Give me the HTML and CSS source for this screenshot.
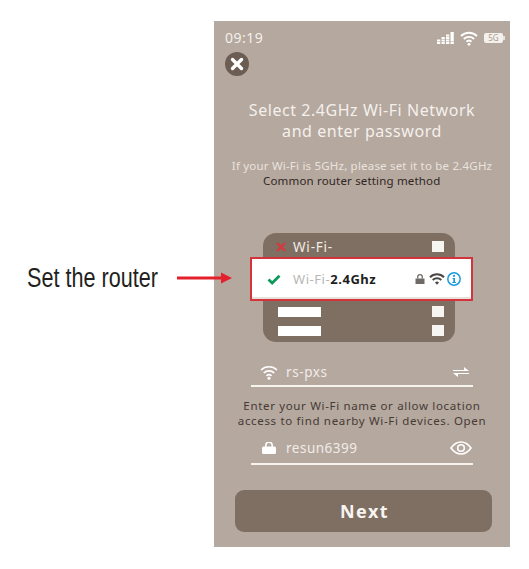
FILE: index.html
```html
<!DOCTYPE html>
<html lang="en">
<head>
<meta charset="utf-8">
<title>Set the router</title>
<link rel="stylesheet" href="styles.css">
</head>
<body>
<div class="page">
  <div class="callout">
    <span class="callout-label"><span class="callout-text">Set the router</span></span>
    <svg class="callout-arrow" width="55" height="14" viewBox="0 0 55 14"><path d="M0 5.500H44V1.500L55 7L44 12.500V8.500H0Z" fill="#e3202c"/></svg>
  </div>
  <main class="phone">
    <div class="status">
      <span class="time">09:19</span>
      <div class="status-icons">
        <svg width="17" height="12" viewBox="0 0 17 12" fill="#fff"><path d="M0 7.400h3.300v2H0zM0 10h3.300v2H0zM4.500 5h3.300v2H4.500zM4.500 7.400h3.300v2H4.500zM4.500 10h3.300v2H4.500zM9 2.600h3.300v2H9zM9 5h3.300v2H9zM9 7.400h3.300v2H9zM9 10h3.300v2H9zM13.500 0h3.300v9.400h-3.300zM13.500 10h3.300v2h-3.300z"/></svg>
        <svg width="18" height="15" viewBox="0 0 18 15" fill="none" stroke="#fff" stroke-width="1.900"><path d="M1 5a11.500 11.500 0 0 1 16 0M3.800 8a7.500 7.500 0 0 1 10.400 0M6.500 10.800a3.600 3.600 0 0 1 5 0"/><circle cx="9" cy="13.300" r="1.400" fill="#fff" stroke="none"/></svg>
        <div class="battery"><span>5G</span></div>
      </div>
    </div>
    <button class="close" aria-label="Close">
      <svg width="24" height="24" viewBox="0 0 24 24"><circle cx="12" cy="12" r="12" fill="#6b5d53"/><path d="M7.500 7.500L16.500 16.500M16.500 7.500L7.500 16.500" stroke="#fff" stroke-width="3.400" stroke-linecap="round"/></svg>
    </button>
    <h1 class="title">Select 2.4GHz Wi-Fi Network<br>and enter password</h1>
    <p class="hint">If your Wi-Fi is 5GHz, please set it to be 2.4GHz</p>
    <p class="method">Common router setting method</p>

    <section class="networks">
      <div class="net-row">
        <svg class="net-x" width="10" height="10" viewBox="0 0 10 10"><path d="M1 1L9 9M9 1L1 9" stroke="#d8383c" stroke-width="2.200"/></svg>
        <span class="net-name">Wi-Fi-</span>
        <span class="box"></span>
      </div>
      <div class="net-gap"></div>
      <div class="net-row bar-row"><span class="bar"></span><span class="box"></span></div>
      <div class="net-row bar-row"><span class="bar"></span><span class="box"></span></div>
      <div class="selected">
        <svg class="check" width="14" height="11" viewBox="0 0 14 11"><path d="M1.500 5.500L5.200 9L12.500 1.800" fill="none" stroke="#0f9a5c" stroke-width="2.800"/></svg>
        <span class="sel-name">Wi-Fi-<b>2.4Ghz</b></span>
        <div class="sel-icons">
          <svg width="10" height="10" viewBox="0 0 10 10"><path d="M0.500 4.500h9V10h-9z" fill="#6e6a67"/><path d="M2.700 4.500V3a2.300 2.300 0 0 1 4.600 0v1.500" fill="none" stroke="#6e6a67" stroke-width="1.300"/></svg>
          <svg width="16" height="12" viewBox="0 0 16 12" fill="none" stroke="#4a4644" stroke-width="2"><path d="M1 4.200a10 10 0 0 1 14 0M3.700 7a6.200 6.200 0 0 1 8.600 0"/><path d="M6 9.500L8 11.800L10 9.500a3 3 0 0 0-4 0z" fill="#4a4644" stroke="none"/></svg>
          <svg width="14" height="14" viewBox="0 0 14 14"><circle cx="7" cy="7" r="6.200" fill="#fff" stroke="#1b9bdc" stroke-width="1.500"/><circle cx="7" cy="3.900" r="1.100" fill="#1b9bdc"/><path d="M5.500 6h2.500v4h1v1.100H5.300V10h1V7.100h-0.800z" fill="#1b9bdc"/></svg>
        </div>
      </div>
    </section>

    <div class="field field-wifi">
      <svg class="field-icon" width="18" height="15" viewBox="0 0 18 15" fill="none" stroke="#fff" stroke-width="1.700"><path d="M1 5a11.500 11.500 0 0 1 16 0M3.800 8a7.500 7.500 0 0 1 10.400 0M6.500 10.800a3.600 3.600 0 0 1 5 0"/><circle cx="9" cy="13.300" r="1.500" fill="#fff" stroke="none"/></svg>
      <span class="field-text">rs-pxs</span>
      <svg class="swap" width="16" height="10" viewBox="0 0 16 10" fill="#fff"><path d="M0 4V3h11V0l5 4zM16 6v1H5v3L0 6z"/></svg>
    </div>
    <p class="help">Enter your Wi-Fi name or allow location<br>access to find nearby Wi-Fi devices. Open</p>
    <div class="field field-pass">
      <svg class="field-icon lock" width="14" height="12" viewBox="0 0 14 12"><rect x="0" y="4.500" width="14" height="7.500" rx="1.500" fill="#fff"/><path d="M3.800 5V3.400a3.200 3.200 0 0 1 6.400 0V5" fill="none" stroke="#fff" stroke-width="1.500"/></svg>
      <span class="field-text">resun6399</span>
      <svg class="eye" width="22" height="14" viewBox="0 0 22 14" fill="none" stroke="#fff" stroke-width="1.600"><path d="M1 7C4 2.800 7.500 1 11 1s7 1.800 10 6c-3 4.200-6.500 6-10 6S4 11.200 1 7z"/><circle cx="11" cy="7" r="3.300"/></svg>
    </div>
    <button class="next">Next</button>
  </main>
</div>
</body>
</html>
```
FILE: styles.css
```css
* { box-sizing: border-box; }
html, body { margin: 0; padding: 0; background: #fff; }
body { width: 529px; height: 569px; overflow: hidden; }
.page { display: flex; align-items: flex-start; padding-top: 21px; }

.callout { position: relative; z-index: 1; width: 214px; height: 514px; display: flex; align-items: center; padding-left: 27px; gap: 18px; flex: none; }
.callout-label { display: block; width: 132px; flex: none; font-family: "Liberation Sans", sans-serif; font-size: 27px; color: #231f20; white-space: nowrap; line-height: 30px; }
.callout-text { display: inline-block; transform: scaleX(0.8); transform-origin: left center; }
.callout-arrow { flex: none; }

.phone { width: 296px; height: 526px; flex: none; background: #b5a89f; font-family: "Noto Sans", sans-serif; color: #fff; display: flex; flex-direction: column; align-items: stretch; }

.status { display: flex; justify-content: space-between; align-items: center; height: 18px; margin-top: 8px; padding: 0 5px 0 11px; }
.time { font-size: 14px; letter-spacing: 0.5px; color: #f4f0ec; line-height: 18px; }
.status-icons { display: flex; align-items: center; gap: 6px; }
.battery { position: relative; width: 19px; height: 10px; margin-right: 2px; background: #f4f0ec; border-radius: 2px; font-size: 8px; line-height: 10px; text-align: center; color: #a99c92; }
.battery::after { content: ""; position: absolute; left: 19px; top: 3px; width: 2px; height: 4px; background: #e8e1db; }

.close { width: 24px; height: 24px; margin: 5px 0 0 11px; padding: 0; border: 0; background: none; display: block; }
.close svg { display: block; }

.title { margin: 24px 0 0; font-size: 16px; font-weight: 400; line-height: 21px; letter-spacing: 0.55px; text-align: center; color: #f4f0ec; }
.hint { margin: 16px 0 0; font-size: 11.500px; line-height: 15px; letter-spacing: 0.2px; text-align: center; color: #e9e3dd; white-space: nowrap; }
.method { margin: 0; font-size: 11.500px; line-height: 15px; letter-spacing: 0.17px; color: #2f2723; padding-left: 49px; white-space: nowrap; }

.networks { position: relative; width: 192px; height: 109px; margin: 45px 0 0 49px; background: #7f6f63; border-radius: 13px; padding: 8px 11px 0 15px; flex: none; }
.net-row { display: flex; align-items: center; height: 11px; }
.net-x { margin: 0 7px 0 -2px; flex: none; }
.net-name { font-size: 13.500px; letter-spacing: 0.8px; color: #f1ece7; line-height: 12px; }
.box { width: 12px; height: 11px; background: #f7f5f2; margin-left: auto; flex: none; }
.net-gap { height: 54px; }
.bar-row { margin-bottom: 8px; }
.bar { width: 43px; height: 10px; background: #fff; display: block; }

.selected { position: absolute; left: -13px; top: 24px; width: 223px; height: 44px; background: #fff; border: 2px solid #d5333b; display: flex; align-items: center; padding: 0 10px 0 15px; box-shadow: inset 0 -2px 0 #e8e2dd; }
.check { flex: none; }
.sel-name { margin-left: 12px; font-size: 13px; letter-spacing: 0.55px; color: #b8b6b4; white-space: nowrap; }
.sel-name b { color: #1d1d1d; font-weight: 700; }
.sel-icons { display: flex; align-items: center; gap: 4px; margin-left: auto; }
.sel-icons svg { display: block; }
.sel-icons svg:nth-child(2) { margin-right: -2px; }

.field { display: flex; align-items: center; width: 222px; margin-left: 37px; border-bottom: 2px solid #f7f3ef; }
.field-wifi { margin-top: 19px; height: 26px; padding: 0 4px 2px 9px; }
.field-pass { margin-top: 9px; height: 28px; padding: 0 1px 4px 11px; }
.field-text { font-size: 13.500px; letter-spacing: 0.6px; color: #f1ece7; margin-left: 8px; line-height: 18px; }
.field-pass .field-text { margin-left: 10px; letter-spacing: 0.5px; }
.field-icon { flex: none; display: block; }
.swap { margin-left: auto; flex: none; }
.eye { margin-left: auto; flex: none; }

.help { margin: 11px 0 0; font-size: 11.500px; line-height: 15px; letter-spacing: 0.66px; text-align: center; color: #453b35; white-space: nowrap; }

.next { display: block; width: 257px; height: 42px; margin: 25px 0 0 21px; border: 0; border-radius: 9px; background: #7f6f63; color: #f7f4f1; font-family: "Noto Sans", sans-serif; font-size: 18px; font-weight: 700; letter-spacing: 1.4px; padding: 0 0 0 2px; }
```
